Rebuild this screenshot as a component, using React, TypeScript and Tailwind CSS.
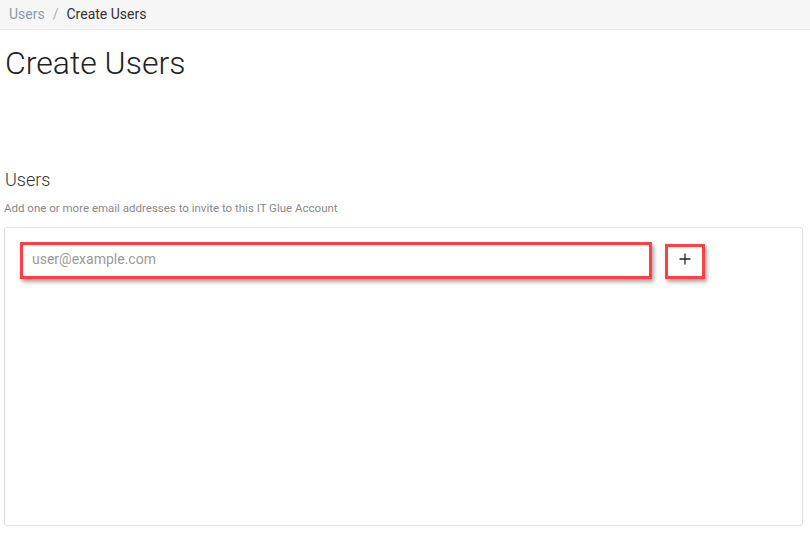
import React, { useState } from 'react'

const App: React.FC = () => {
  const [email, setEmail] = useState('')

  return (
    <div className="min-h-screen bg-white font-['Roboto','Liberation_Sans',sans-serif] text-[#333]">
      {/* Breadcrumb */}
      <div className="h-[30px] bg-[#f6f6f6] border-b border-[#ebebeb] px-[9px] flex items-center text-[14px]">
        <span className="text-[#8f9aa5]">Users</span>
        <span className="mx-[8px] text-[#aab1b8]">/</span>
        <span className="text-[#333]">Create Users</span>
      </div>

      <div className="pl-[4px] pr-[7px]">
        <h1 className="mt-[16px] ml-[1px] text-[32px] leading-[1.1] font-light text-[#222]">Create Users</h1>

        <h2 className="mt-[88px] ml-[1px] text-[18px] leading-[1.2] font-light text-[#333]">Users</h2>
        <p className="mt-[9px] text-[11.5px] leading-[16px] text-[#8a8a8a]">
          Add one or more email addresses to invite to this IT Glue Account
        </p>

        {/* Card */}
        <div className="mt-[11px] h-[299px] border border-[#e2e2e2] rounded-[3px] bg-white pl-[15px] pt-[14px]">
          <div className="flex items-start">
            <div className="w-[632px] h-[37px] border-[3px] border-[#fb4144] shadow-[2px_3px_4px_rgba(0,0,0,0.35)] bg-white flex items-center">
              <input
                value={email}
                onChange={(e) => setEmail(e.target.value)}
                placeholder="user@example.com"
                className="w-full h-full px-[9px] pb-[3px] text-[14px] text-[#333] placeholder:text-[#9a9a9a] outline-none bg-transparent"
              />
            </div>
            <button className="ml-[13px] mt-[2px] w-[40px] h-[35px] border-[3px] border-[#fb4144] shadow-[2px_3px_4px_rgba(0,0,0,0.35)] bg-white flex items-center justify-center">
              <svg width="12" height="12" viewBox="0 0 12 12" className="mb-[4px]">
                <path d="M6 0.5v11M0.5 6h11" stroke="#222" strokeWidth="1.3" />
              </svg>
            </button>
          </div>
        </div>
      </div>
    </div>
  )
}

export default App
